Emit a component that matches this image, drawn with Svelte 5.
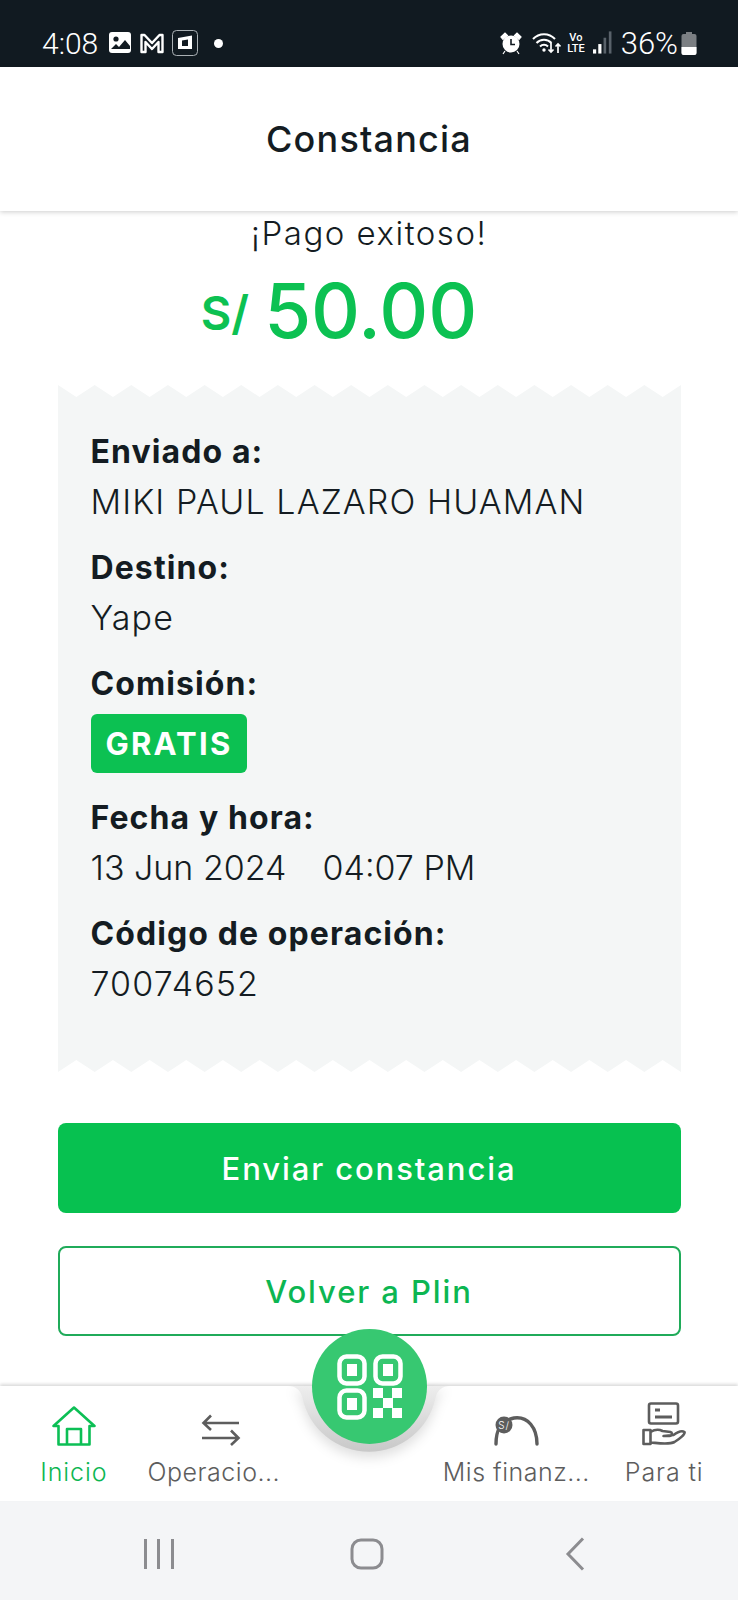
<script>
  const rows = [
    { label: "Enviado a:", value: "MIKI PAUL LAZARO HUAMAN" },
    { label: "Destino:", value: "Yape" },
    { label: "Comisión:", badge: "GRATIS" },
    { label: "Fecha y hora:", value: "13 Jun 2024", extra: "04:07 PM" },
    { label: "Código de operación:", value: "70074652" }
  ];

  // serrated edge of the receipt, 17 teeth over 623px
  const tooth = 623 / 17;
  let edge = "0,0 ";
  for (let i = 0; i < 17; i++) {
    edge += `${i * tooth + tooth / 2},12 ${(i + 1) * tooth},0 `;
  }
  edge += "623,14 0,14";
</script>

<div class="page">
  <div class="status">
    <div class="status-left">
      <span class="time">4:08</span>
      <svg class="pic" width="23" height="22" viewBox="0 0 23 22">
        <rect width="22" height="21" x="0" y="0" rx="3" fill="#fff"/>
        <circle cx="7" cy="7" r="2.6" fill="#111a21"/>
        <path d="M2 17l5-5 3 3 6-7 5 6v3H2z" fill="#111a21"/>
      </svg>
      <svg class="gm" width="26" height="22" viewBox="0 0 25 22">
        <path d="M2 20V3h3l7.500 8L20 3h3v17h-4V10l-6.500 7L6 10v10z" fill="none" stroke="#fff" stroke-width="2.400" stroke-linejoin="round"/>
      </svg>
      <svg class="box" width="26" height="26" viewBox="0 0 26 26">
        <rect x="0.500" y="0.500" width="25" height="25" rx="4" fill="none" stroke="#aab0b4"/>
        <path d="M6 8l14-2.500V19H6z" fill="#fff"/>
        <path d="M10 10.500l6-1V16h-6z" fill="#111a21"/>
      </svg>
      <span class="dot"></span>
    </div>
    <div class="status-right">
      <svg width="22" height="24" viewBox="0 0 22 24">
        <circle cx="11" cy="13" r="8.500" fill="#fff"/>
        <path d="M11 8v5.500h4" fill="none" stroke="#111a21" stroke-width="1.600"/>
        <path d="M1 6l4-4 2.500 2.500L3 8.500zM21 6l-4-4-2.500 2.500L19 8.500zM5 20l-2 3M17 20l2 3" fill="#fff" stroke="#fff" stroke-width="1.200"/>
      </svg>
      <svg class="wifi" width="29" height="24" viewBox="0 0 29 24">
        <path d="M1 8c6-6.500 16-6.500 22 0M4.500 12c4-4.300 11-4.300 15 0M8 15.500c2.300-2.300 5.700-2.300 8 0" fill="none" stroke="#fff" stroke-width="2"/>
        <circle cx="12" cy="19" r="1.700" fill="#fff"/>
        <path d="M19 12v9m-2.500-2.500L19 21l2.500-2.500M26 22v-9m-2.500 2.500L26 13l2.500 2.500" fill="none" stroke="#fff" stroke-width="1.700"/>
      </svg>
      <span class="volte">Vo<br />LTE</span>
      <svg class="signal" width="19" height="24" viewBox="0 0 18 22">
        <rect x="0" y="17" width="3" height="4" fill="#fff"/>
        <rect x="5" y="12" width="3" height="9" fill="#fff"/>
        <rect x="10" y="6" width="2.500" height="15" fill="#59626a"/>
        <rect x="15" y="0" width="2.500" height="21" fill="#59626a"/>
      </svg>
      <span class="pct">36%</span>
      <svg width="16" height="23" viewBox="0 0 15 23">
        <rect x="4.500" y="0" width="6" height="3" fill="#7b7f83"/>
        <rect x="0" y="2" width="15" height="21" rx="2" fill="#7b7f83"/>
        <path d="M0 15h15v6a2 2 0 0 1-2 2H2a2 2 0 0 1-2-2z" fill="#fff"/>
      </svg>
    </div>
  </div>

  <header>Constancia</header>

  <main>
    <p class="ok">¡Pago exitoso!</p>
    <div class="amount"><span class="cur">S/</span><span class="num">50.00</span></div>

    <section class="receipt">
      <svg class="edge" width="623" height="14" viewBox="0 0 623 14"><polygon points={edge} fill="#f4f6f6"/></svg>
      <div class="rows">
        {#each rows as row}
          <div class="row">
            <div class="label">{row.label}</div>
            {#if row.badge}
              <span class="badge">{row.badge}</span>
            {:else if row.extra}
              <div class="value date">{row.value}<span class="extra">{row.extra}</span></div>
            {:else}
              <div class="value">{row.value}</div>
            {/if}
          </div>
        {/each}
      </div>
      <svg class="edge flip" width="623" height="14" viewBox="0 0 623 14"><polygon points={edge} fill="#f4f6f6"/></svg>
    </section>

    <button class="btn solid">Enviar constancia</button>
    <button class="btn outline">Volver a Plin</button>
  </main>

  <nav>
    <svg class="notch" width="170" height="90" viewBox="0 0 170 90">
      <defs>
        <linearGradient id="well" x1="0" y1="0" x2="0" y2="1">
          <stop offset="0" stop-color="#eeeeee"/>
          <stop offset="1" stop-color="#c8c8c8"/>
        </linearGradient>
      </defs>
      <path d="M4 0C12 0 16 4 18.300 11A68 68 0 0 0 151.700 11C154 4 158 0 166 0Z" fill="url(#well)"/>
    </svg>
    <button class="fab" aria-label="QR">
      <svg width="66" height="66" viewBox="0 0 66 66">
        <g fill="none" stroke="#fff" stroke-width="4.500">
          <rect x="2.500" y="2.500" width="25" height="27" rx="7"/>
          <rect x="38.500" y="2.500" width="25" height="27" rx="7"/>
          <rect x="2.500" y="36.500" width="25" height="27" rx="7"/>
        </g>
        <g fill="#fff">
          <rect x="10" y="10" width="10" height="12"/>
          <rect x="46" y="10" width="10" height="12"/>
          <rect x="10" y="44" width="10" height="12"/>
          <rect x="36" y="34" width="10" height="10"/>
          <rect x="55" y="34" width="10" height="10"/>
          <rect x="46" y="44" width="10" height="10"/>
          <rect x="36" y="54" width="10" height="10"/>
          <rect x="55" y="54" width="10" height="10"/>
        </g>
      </svg>
    </button>

    <div class="tab active">
      <svg width="44" height="40" viewBox="0 0 44 40" fill="none" stroke="#0cbf55" stroke-width="2.600" stroke-linejoin="round">
        <path d="M1.500 20L22 1.500 42.500 20h-5v18.500h-31V20z"/>
        <path d="M15 38.500V23h14v15.500"/>
      </svg>
      <span>Inicio</span>
    </div>
    <div class="tab">
      <svg width="40" height="32" viewBox="0 0 40 32" fill="none" stroke="#5d5d5d" stroke-width="2.600">
        <path d="M38 9H3M10 1.500L2.500 9l7.500 7"/>
        <path d="M1 24h36M30 16.500l7.500 7.500-7.500 7"/>
      </svg>
      <span class="cut">Operacio...</span>
    </div>
    <div class="tab"></div>
    <div class="tab">
      <svg width="46" height="32" viewBox="0 0 46 32" fill="none">
        <path d="M2 30C2 18 5 7 20 4 34 2 43 14 43 30" stroke="#5d5d5d" stroke-width="3.400" stroke-linecap="round"/>
        <circle cx="10" cy="11" r="8.500" fill="#5d5d5d"/>
        <text x="10" y="15" font-size="10" text-anchor="middle" fill="#fff" stroke="none">S/</text>
      </svg>
      <span class="cut">Mis finanz...</span>
    </div>
    <div class="tab">
      <svg width="44" height="44" viewBox="0 0 44 44" fill="none" stroke="#5d5d5d" stroke-width="2.600" stroke-linejoin="round">
        <rect x="7" y="1.500" width="29" height="20" rx="2"/>
        <path d="M13 8h5M13 15h17" stroke-width="3"/>
        <path d="M1.500 28h7v14h-7zM8.500 30c5-3 8-3 12-1l8 1c2 .5 2 4-1 4h-6l10-1c4-3 8-5 11-3 1 2-5 7-10 10-6 3-17 1-24 .5"/>
      </svg>
      <span>Para ti</span>
    </div>
  </nav>

  <div class="sysbar">
    <svg width="32" height="32" viewBox="0 0 32 32" fill="#8c8c90">
      <rect x="1" y="1" width="3" height="30"/><rect x="14" y="1" width="3" height="30"/><rect x="28" y="1" width="3" height="30"/>
    </svg>
    <svg width="34" height="32" viewBox="0 0 34 32" fill="none" stroke="#8c8c90" stroke-width="3">
      <rect x="2" y="2" width="30" height="28" rx="9"/>
    </svg>
    <svg class="back" width="20" height="34" viewBox="0 0 20 34" fill="none" stroke="#8c8c90" stroke-width="3">
      <path d="M18 1.500L3 17l15 15.500"/>
    </svg>
  </div>
</div>

<style>
  :global(body) {
    background: #fff;
  }
  .page {
    width: 738px;
    height: 1600px;
    display: flex;
    flex-direction: column;
    overflow: hidden;
    font-family: Inter, "Liberation Sans", sans-serif;
    color: #141c22;
  }
  .status {
    height: 67px;
    flex: none;
    background: #111a21;
    color: #fff;
    display: flex;
    justify-content: space-between;
    align-items: center;
    padding: 19px 41px 0 42px;
    box-sizing: border-box;
    font-family: Roboto, sans-serif;
  }
  .status-left,
  .status-right {
    display: flex;
    align-items: center;
  }
  .time {
    font-size: 30px;
    font-weight: 300;
  }
  .pic {
    margin-left: 11px;
  }
  .gm {
    margin-left: 7px;
  }
  .box {
    margin-left: 7px;
  }
  .dot {
    width: 9px;
    height: 9px;
    border-radius: 50%;
    background: #fff;
    margin-left: 16px;
  }
  .wifi {
    margin-left: 10px;
  }
  .volte {
    font-size: 11px;
    line-height: 11px;
    font-weight: 500;
    margin-left: 6px;
    text-align: center;
  }
  .signal {
    margin-left: 8px;
  }
  .pct {
    font-size: 31px;
    font-weight: 300;
    margin: 0 3px 0 9px;
  }
  header {
    height: 144px;
    flex: none;
    display: flex;
    align-items: center;
    justify-content: center;
    font-size: 36px;
    font-weight: 500;
    letter-spacing: 1.2px;
    background: #fff;
    box-shadow: 0 1px 5px rgba(0, 0, 0, 0.2);
    position: relative;
    z-index: 1;
  }
  main {
    flex: 1;
    display: flex;
    flex-direction: column;
    align-items: center;
  }
  .ok {
    margin: 0;
    padding-top: 2px;
    font-size: 33px;
    line-height: 40px;
    font-weight: 300;
    letter-spacing: 1.5px;
  }
  .amount {
    display: flex;
    align-items: baseline;
    color: #0cc152;
    height: 90px;
    line-height: 90px;
    margin-top: 12px;
    padding-right: 60px;
  }
  .cur {
    font-size: 47px;
    font-weight: 600;
    margin-right: 15px;
    position: relative;
    top: -8px;
  }
  .num {
    font-size: 76px;
    font-weight: 500;
  }
  .receipt {
    width: 623px;
    margin-top: 30px;
    display: flex;
    flex-direction: column;
  }
  .edge {
    display: block;
  }
  .flip {
    transform: scaleY(-1);
  }
  .rows {
    background: #f4f6f6;
    padding: 28px 33px 49px;
    display: flex;
    flex-direction: column;
    gap: 16px;
  }
  .label {
    font-size: 32px;
    line-height: 50px;
    font-weight: 700;
    letter-spacing: 1.100px;
  }
  .value {
    font-size: 34px;
    line-height: 50px;
    font-weight: 300;
    letter-spacing: 1.100px;
  }
  .date {
    letter-spacing: 0;
  }
  .extra {
    margin-left: 36px;
  }
  .badge {
    display: inline-block;
    margin: 5px 0 4px;
    padding: 0 15px;
    height: 59px;
    line-height: 59px;
    background: #0cc152;
    color: #fff;
    font-size: 31px;
    font-weight: 700;
    letter-spacing: 2.200px;
    border-radius: 6px;
  }
  .btn {
    width: 623px;
    height: 90px;
    border-radius: 8px;
    font: 500 31px Inter, sans-serif;
    letter-spacing: 1.900px;
  }
  .solid {
    margin-top: 51px;
    background: #07c150;
    color: #fff;
    border: none;
  }
  .outline {
    margin-top: 33px;
    background: #fff;
    color: #0cb652;
    border: 2px solid #20ab5a;
  }
  nav {
    height: 115px;
    flex: none;
    background: #fff;
    box-shadow: 0 -2px 3px rgba(0, 0, 0, 0.14);
    display: grid;
    grid-template-columns: repeat(5, 1fr);
    position: relative;
    z-index: 2;
  }
  .notch {
    position: absolute;
    left: 284px;
    top: 0;
    filter: drop-shadow(0 6px 6px rgba(0, 0, 0, 0.12));
  }
  .fab {
    position: absolute;
    left: 312px;
    top: -57px;
    width: 115px;
    height: 115px;
    padding: 0;
    border: none;
    border-radius: 50%;
    background: #37c871;
    display: flex;
    align-items: center;
    justify-content: center;
  }
  .tab {
    min-width: 0;
    height: 115px;
    position: relative;
    display: flex;
    flex-direction: column;
    align-items: center;
    color: #5d5d5d;
    font-size: 25px;
    font-weight: 300;
    letter-spacing: 0.900px;
  }
  .tab svg {
    position: absolute;
    bottom: 55px;
  }
  .tab span {
    position: absolute;
    left: 0;
    right: 0;
    top: 69px;
    line-height: 34px;
    text-align: center;
    white-space: nowrap;
  }
  .tab .cut {
    text-align: left;
    letter-spacing: 0.500px;
  }
  .active {
    color: #0cb652;
  }
  .sysbar {
    height: 99px;
    flex: none;
    box-sizing: border-box;
    background: #f4f5f7;
    display: flex;
    align-items: center;
    column-gap: 175px;
    padding: 6px 0 0 143px;
  }
  .back {
    margin-left: 6px;
  }
</style>
